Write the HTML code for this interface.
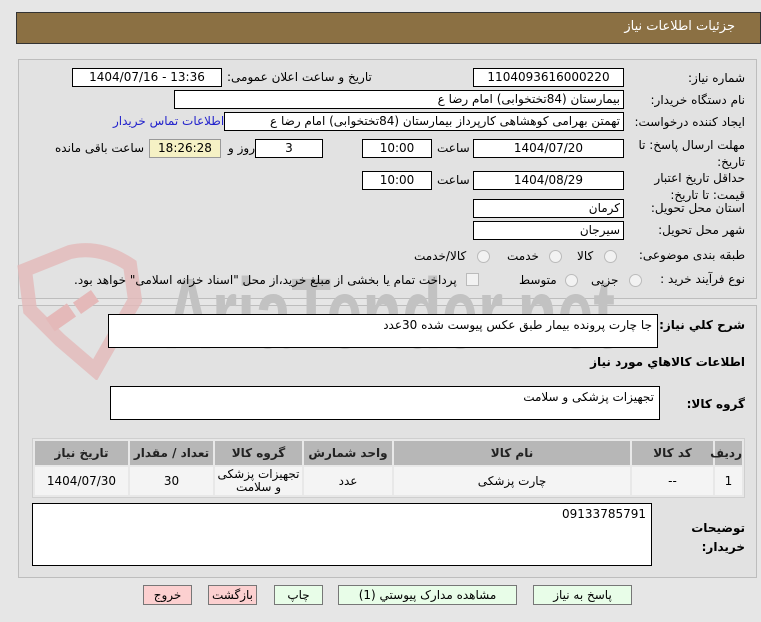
<!DOCTYPE html>
<html><head><meta charset="utf-8"><style>
body{margin:0;width:761px;height:622px;background:#e6e6e6;font-family:"DejaVu Sans",sans-serif;font-size:12px;color:#000;position:relative;overflow:hidden}
.a{position:absolute}
.box{position:absolute;background:#fff;border:1px solid #000;box-sizing:border-box;height:19px;line-height:17px;text-align:center;font-size:12px}
.lbl{position:absolute;direction:rtl;white-space:nowrap;font-size:12px}
.panel{position:absolute;left:18px;width:739px;border:1px solid #bdbdbd;background:#e2e2e2;box-sizing:border-box}
.ta{position:absolute;background:#fff;border:1px solid #000;box-sizing:border-box;direction:rtl;padding:3px 5px;font-size:12px}
table{border-collapse:separate;border-spacing:2px;position:absolute;left:32px;top:438px;width:713px;background:#e8e8e8;border:1px solid #cfcfcf;table-layout:fixed}
th{background:#b7b7b7;height:24px;font-weight:bold;font-size:12px;color:#222;padding:0}
td{background:#f4f4f4;height:28px;text-align:center;font-size:12px;line-height:13px;padding:0}
.btn{position:absolute;top:585px;height:20px;border:1px solid #777;box-sizing:border-box;text-align:center;line-height:18px;font-size:12px}
.radio{position:absolute;width:11px;height:11px;border-radius:50%;border:1px solid #bbb;background:#f2f2f2}
</style></head><body>
<div class="a" style="left:16px;top:12px;width:745px;height:32px;background:#8b7043;border:1px solid #333;box-sizing:border-box"></div>
<div class="lbl" style="right:26px;top:19px;color:#fff;font-size:13px">جزئیات اطلاعات نیاز</div>

<div class="panel" style="top:59px;height:240px"></div>
<div class="panel" style="top:305px;height:273px"></div>

<svg class="a" style="left:0;top:240px" width="761" height="140">
<path d="M25 30 L70 12 Q100 5 130 25 L135 60 L95 130 L60 100 L30 70 Z" fill="none" stroke="#e4b9b9" stroke-width="14" opacity=".8"/>
<rect x="48" y="70" width="26" height="16" fill="#e4b9b9" transform="rotate(-35 60 78)"/>
<rect x="75" y="55" width="22" height="14" fill="#e4b9b9" transform="rotate(-35 86 62)"/>
<text x="165" y="108" font-family="Liberation Sans Narrow,Liberation Sans,sans-serif" font-size="100" fill="#c2c2c2" textLength="450" lengthAdjust="spacingAndGlyphs" font-weight="bold">AriaTender.net</text>
</svg>

<div class="lbl" style="right:16px;top:71px">شماره نیاز:</div>
<div class="box" style="left:473px;top:68px;width:151px">1104093616000220</div>
<div class="lbl" style="left:227px;top:70px">تاریخ و ساعت اعلان عمومی:</div>
<div class="box" style="left:72px;top:68px;width:150px">1404/07/16 - 13:36</div>

<div class="lbl" style="right:16px;top:93px">نام دستگاه خریدار:</div>
<div class="box" style="left:174px;top:90px;width:450px;text-align:right;padding-right:3px;direction:rtl">بیمارستان (84تختخوابی) امام رضا  ع</div>

<div class="lbl" style="right:16px;top:115px">ایجاد کننده درخواست:</div>
<div class="box" style="left:224px;top:112px;width:400px;text-align:right;padding-right:3px;direction:rtl">تهمتن بهرامی کوهشاهی کارپرداز بیمارستان (84تختخوابی) امام رضا  ع</div>
<div class="lbl" style="left:113px;top:114px;color:#22c">اطلاعات تماس خریدار</div>

<div class="lbl" style="right:16px;top:137px;line-height:17px;text-align:right">مهلت ارسال پاسخ: تا<br>تاریخ:</div>
<div class="box" style="left:473px;top:139px;width:151px">1404/07/20</div>
<div class="lbl" style="left:437px;top:141px">ساعت</div>
<div class="box" style="left:362px;top:139px;width:70px">10:00</div>
<div class="box" style="left:255px;top:139px;width:68px">3</div>
<div class="lbl" style="left:228px;top:141px">روز و</div>
<div class="box" style="left:149px;top:139px;width:72px;background:#f5f1c5;border-color:#999">18:26:28</div>
<div class="lbl" style="left:55px;top:141px">ساعت باقی مانده</div>

<div class="lbl" style="right:16px;top:170px;line-height:17px;text-align:right">حداقل تاریخ اعتبار<br>قیمت: تا تاریخ:</div>
<div class="box" style="left:473px;top:171px;width:151px">1404/08/29</div>
<div class="lbl" style="left:437px;top:173px">ساعت</div>
<div class="box" style="left:362px;top:171px;width:70px">10:00</div>

<div class="lbl" style="right:16px;top:201px">استان محل تحویل:</div>
<div class="box" style="left:473px;top:199px;width:151px;text-align:right;padding-right:3px">کرمان</div>
<div class="lbl" style="right:16px;top:223px">شهر محل تحویل:</div>
<div class="box" style="left:473px;top:221px;width:151px;text-align:right;padding-right:3px">سیرجان</div>

<div class="lbl" style="right:16px;top:248px">طبقه بندی موضوعی:</div>
<div class="radio" style="left:604px;top:250px"></div><div class="lbl" style="left:577px;top:249px">کالا</div>
<div class="radio" style="left:549px;top:250px"></div><div class="lbl" style="left:507px;top:249px">خدمت</div>
<div class="radio" style="left:477px;top:250px"></div><div class="lbl" style="left:414px;top:249px">کالا/خدمت</div>

<div class="lbl" style="right:16px;top:272px">نوع فرآیند خرید :</div>
<div class="radio" style="left:629px;top:274px"></div><div class="lbl" style="left:591px;top:273px">جزیی</div>
<div class="radio" style="left:565px;top:274px"></div><div class="lbl" style="left:519px;top:273px">متوسط</div>
<div class="a" style="left:466px;top:273px;width:11px;height:11px;border:1px solid #bbb;background:#f2f2f2"></div>
<div class="lbl" style="left:74px;top:273px">پرداخت تمام یا بخشی از مبلغ خرید،از محل "اسناد خزانه اسلامی" خواهد بود.</div>

<div class="lbl" style="right:16px;top:318px;font-weight:bold">شرح کلي نیاز:</div>
<div class="ta" style="left:108px;top:314px;width:550px;height:34px">جا  چارت پرونده بیمار طبق عکس پیوست شده 30عدد</div>
<div class="lbl" style="right:16px;top:355px;font-weight:bold">اطلاعات کالاهاي مورد نیاز</div>
<div class="lbl" style="right:16px;top:397px;font-weight:bold">گروه کالا:</div>
<div class="ta" style="left:110px;top:386px;width:550px;height:34px">تجهیزات پزشکی و سلامت</div>

<table dir="rtl">
<colgroup><col style="width:27px"><col style="width:81px"><col style="width:236px"><col style="width:88px"><col style="width:87px"><col style="width:83px"><col style="width:93px"></colgroup>
<tr><th>ردیف</th><th>کد کالا</th><th>نام کالا</th><th>واحد شمارش</th><th>گروه کالا</th><th>تعداد / مقدار</th><th>تاریخ نیاز</th></tr>
<tr><td>1</td><td>--</td><td>چارت پزشکی</td><td>عدد</td><td>تجهیزات پزشکی و سلامت</td><td>30</td><td>1404/07/30</td></tr>
</table>

<div class="lbl" style="right:16px;top:519px;font-weight:bold;line-height:19px;text-align:right">توضیحات<br>خریدار:</div>
<div class="ta" style="left:32px;top:503px;width:620px;height:63px">09133785791</div>

<div class="btn" style="left:143px;width:49px;background:#fcd0d0">خروج</div>
<div class="btn" style="left:208px;width:49px;background:#fcd0d0">بازگشت</div>
<div class="btn" style="left:274px;width:49px;background:#e8fde8">چاپ</div>
<div class="btn" style="left:338px;width:179px;background:#e8fde8">مشاهده مدارک پیوستي (1)</div>
<div class="btn" style="left:533px;width:99px;background:#e8fde8">پاسخ به نیاز</div>
</body></html>
